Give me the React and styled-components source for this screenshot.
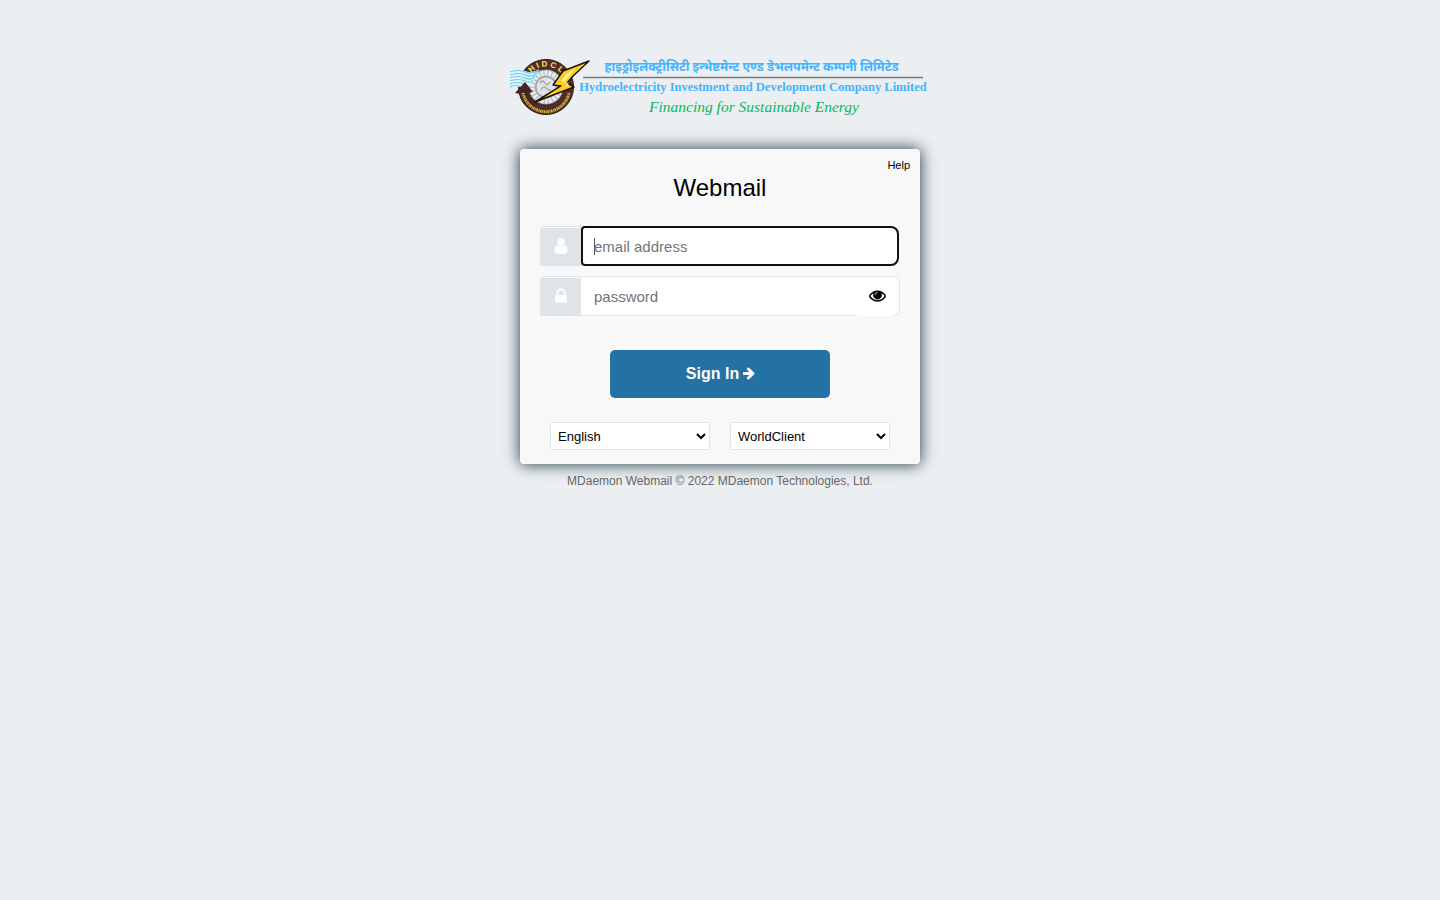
import React from "react";
import styled, { createGlobalStyle } from "styled-components";

const GlobalStyle = createGlobalStyle`
  * { box-sizing: border-box; }
  body {
    margin: 0;
    background: #ebeff2;
    color: #000;
    font-family: "Liberation Sans", Arial, sans-serif;
  }
`;

const Page = styled.main`
  display: flex;
  flex-direction: column;
  align-items: center;
  padding: 56px 10px 24px;
`;

const Logo = styled.svg`
  display: block;
  width: 100%;
  max-width: 420px;
  height: auto;
  margin-bottom: 29px;
  overflow: visible;
`;

const Card = styled.form`
  display: flex;
  flex-direction: column;
  width: 100%;
  max-width: 400px;
  padding: 10px 20px 14px;
  border-radius: 4px;
  background: #f8f8f8;
  box-shadow: 0 0 16px #1c313a;
`;

const HelpLink = styled.a`
  align-self: flex-end;
  margin-right: -10px;
  color: #000;
  font-size: 11px;
  line-height: 12px;
  text-decoration: none;
`;

const Title = styled.h1`
  margin: 2px 0 23px;
  font-size: 24px;
  font-weight: 400;
  line-height: 30px;
  text-align: center;
`;

const Field = styled.div`
  display: flex;
  height: 40px;
  margin-bottom: 10px;
`;

const Addon = styled.label`
  display: flex;
  flex: none;
  align-items: center;
  justify-content: center;
  width: 41px;
  padding: 0 0 1px 1px;
  border: 1px solid #e0e4e7;
  border-bottom: 0;
  border-radius: 5px 0 0 3px;
  background: linear-gradient(#fff 1px, #e0e4e7 1px);
  color: #fff;
`;

const InputBox = styled.div`
  display: flex;
  flex: 1;
  min-width: 0;
  border: 1px solid #e0e4e7;
  border-left: 0;
  border-radius: 0 6px 6px 0;
  background: #fff;

  &:focus-within {
    margin-right: 1px;
    border: 2px solid #101010;
    border-radius: 4px 8px 8px 4px;
  }
`;

const TextInput = styled.input`
  flex: 1;
  min-width: 0;
  padding: 1px 0 0 13px;
  border: 0;
  outline: 0;
  background: transparent;
  font-family: inherit;
  font-size: 15px;

  &::placeholder { color: #757575; }
  &:focus { padding-left: 11px; }
  &:focus:placeholder-shown {
    background: linear-gradient(#555, #555) 11px 10px / 1px 17px no-repeat;
  }
`;

const RevealButton = styled.button`
  display: flex;
  align-items: center;
  justify-content: center;
  width: 36px;
  margin: 0 6px -1px 0;
  padding: 0 0 2px 4px;
  border: 0;
  background: #fff;
  color: #000;
  cursor: pointer;

  path {
    stroke: currentColor;
    stroke-width: 40;
  }
`;

const SignInButton = styled.button`
  display: flex;
  align-items: center;
  justify-content: center;
  gap: 3px;
  align-self: center;
  width: 220px;
  height: 48px;
  margin: 24px 0;
  padding: 0 0 0 2px;
  border: 0;
  border-radius: 5px;
  background: #2471a3;
  color: #fff;
  font-family: inherit;
  font-size: 16px;
  font-weight: 700;
  cursor: pointer;

  svg { margin-bottom: 2px; }
`;

const Options = styled.div`
  display: grid;
  grid-template-columns: 1fr 1fr;
  gap: 20px;
  padding: 0 10px;
`;

const Select = styled.select`
  width: 100%;
  height: 28px;
  padding: 1px 3px 0;
  border: 1px solid #e0e4e7;
  border-radius: 3px;
  background: #fff;
  color: #000;
  font-family: inherit;
  font-size: 13px;
`;

const Footer = styled.footer`
  margin-top: 10px;
  color: #666;
  font-size: 12px;
  line-height: 14px;
`;

const paths = {
  user: "M1536 1399q0 109-62.5 187t-150.5 78h-854q-88 0-150.5-78t-62.5-187q0-85 8.5-160.5t31.5-152 58.5-131 94-89 134.5-34.5q131 128 313 128t313-128q76 0 134.5 34.5t94 89 58.5 131 31.5 152 8.5 160.5zm-256-887q0 159-112.5 271.5t-271.5 112.5-271.5-112.5-112.5-271.5 112.5-271.5 271.5-112.5 271.5 112.5 112.5 271.5z",
  lock: "M640 768h512v-192q0-106-75-181t-181-75-181 75-75 181v192zm832 96v576q0 40-28 68t-68 28h-960q-40 0-68-28t-28-68v-576q0-40 28-68t68-28h32v-192q0-184 132-316t316-132 316 132 132 316v192h32q40 0 68 28t28 68z",
  eye: "M1664 960q-152-236-381-353 61 104 61 225 0 185-131.5 316.5t-316.5 131.5-316.5-131.5-131.5-316.5q0-121 61-225-229 117-381 353 133 205 333.5 326.5t434.5 121.5 434.5-121.5 333.5-326.5zm-720-384q0-20-14-34t-34-14q-125 0-214.5 89.5t-89.5 214.5q0 20 14 34t34 14 34-14 14-34q0-86 61-147t147-61q20 0 34-14t14-34zm848 384q0 34-20 69-140 230-376.5 368.5t-499.5 138.5-499.5-139-376.5-368q-20-35-20-69t20-69q140-229 376.5-368t499.5-139 499.5 139 376.5 368q20 35 20 69z",
  arrow: "M1600 960q0 54-37 91l-651 651q-39 37-91 37-51 0-90-37l-75-75q-38-38-38-91t38-91l293-293h-704q-52 0-84.5-37.5t-32.5-90.5v-128q0-53 32.5-90.5t84.5-37.5h704l-293-294q-38-36-38-90t38-90l75-75q38-38 90-38 53 0 91 38l651 651q37 35 37 90z",
};

function Icon({ name, size }) {
  return (
    <svg width={size} height={size} viewBox="0 0 1792 1792" fill="currentColor" aria-hidden="true">
      <path d={paths[name]} />
    </svg>
  );
}

function CompanyLogo() {
  return (
    <Logo viewBox="0 0 840 128" role="img" aria-label="HIDCL">
      <defs>
        <path id="ringTop" d="M15.5 31a20.500 20.500 0 0 1 41 0" />
      </defs>
      <g transform="scale(2)">
        <circle cx="36" cy="31" r="27.500" fill="#56292a" stroke="#2a1515" />
        <circle cx="36" cy="31" r="18" fill="#a9b3b7" stroke="#2e2424" />
        <circle cx="36" cy="31" r="14" fill="none" stroke="#e9eeee" strokeWidth="5" strokeDasharray="3 1" />
        <circle cx="36" cy="31" r="10" fill="#dfe5e6" stroke="#8f9a9e" strokeWidth=".8" />
        <path d="M30 27q3-4 5 0t5-1M31 34q2-5 5-2t5 2" fill="none" stroke="#9aa4a8" strokeWidth="1.300" />
        <path d="M0 15q8-3 15 0t14-2l-8 16q-4 3-8 2t-13 1z" fill="#dff3fa" />
        <g fill="none" stroke="#69c9ef" strokeWidth="1.200">
          <path d="M0 16q8-3 15 0t14-2" />
          <path d="M0 19q8-3 15 0t12-2" />
          <path d="M0 22q8-3 15 0t10-2" />
          <path d="M0 25q8-3 15 0t8-1" />
          <path d="M0 28q8-3 14 0" />
          <path d="M0 31q6-3 11 0" />
        </g>
        <path d="M5 37L15 26l8 10-5 1q2 7 9 11l-5 6Q10 48 10 38z" fill="#4a2322" />
        <text fill="#f5ec45" fontFamily="Liberation Sans, sans-serif" fontSize="8" fontWeight="700">
          <textPath href="#ringTop" startOffset="50%" textAnchor="middle">H I D C L</textPath>
        </text>
        <path d="M13 37a23.500 23.500 0 0 0 46 0" fill="none" stroke="#cdbd3b" strokeWidth="3" strokeDasharray="1.500 .7 1 .5" />
        <path d="M79 5L53 15 43 29l8 1-26 16 39-15-7-4 6-7z" fill="#ffd42a" stroke="#1d120b" strokeWidth="1.500" strokeLinejoin="round" />
        <path d="M72 9L55 17l-8 10 8 1-17 11 21-8-6-4 7-8z" fill="#ffc21f" />
        <path d="M66 12L56 18l-5 7 8 2-8 6 8-4-5-3 5-6z" fill="#fff38a" />
        <path d="M73 21.500h340" stroke="#747b80" strokeWidth="1.500" />
      </g>
      <g textAnchor="middle">
        <text x="483" y="30" fill="#42b4ff" fontFamily="Noto Sans Devanagari, Noto Sans, sans-serif" fontSize="25" fontWeight="700">हाइड्रोइलेक्ट्रीसिटी इन्भेष्टमेन्ट एण्ड डेभलपमेन्ट कम्पनी लिमिटेड</text>
        <text x="486" y="70" fill="#42b4ff" fontFamily="Liberation Serif, serif" fontSize="25" fontWeight="700">Hydroelectricity Investment and Development Company Limited</text>
        <text x="488" y="111" fill="#08b85c" fontFamily="Liberation Serif, serif" fontSize="31" fontStyle="italic">Financing for Sustainable Energy</text>
      </g>
    </Logo>
  );
}

export default function App() {
  const [revealed, setRevealed] = React.useState(false);
  return (
    <>
      <GlobalStyle />
      <Page>
        <CompanyLogo />
        <Card onSubmit={(e) => e.preventDefault()}>
          <HelpLink href="#help">Help</HelpLink>
          <Title>Webmail</Title>
          <Field>
            <Addon htmlFor="email" aria-label="email address"><Icon name="user" size={18} /></Addon>
            <InputBox>
              <TextInput id="email" type="text" placeholder="email address" autoFocus />
            </InputBox>
          </Field>
          <Field>
            <Addon htmlFor="password" aria-label="password"><Icon name="lock" size={18} /></Addon>
            <InputBox>
              <TextInput id="password" type={revealed ? "text" : "password"} placeholder="password" />
              <RevealButton type="button" aria-label="Show password" onClick={() => setRevealed(!revealed)}>
                <Icon name="eye" size={17} />
              </RevealButton>
            </InputBox>
          </Field>
          <SignInButton type="submit">Sign In<Icon name="arrow" size={14} /></SignInButton>
          <Options>
            <Select aria-label="Language" defaultValue="English"><option>English</option></Select>
            <Select aria-label="Theme" defaultValue="WorldClient"><option>WorldClient</option></Select>
          </Options>
        </Card>
        <Footer>MDaemon Webmail © 2022 MDaemon Technologies, Ltd.</Footer>
      </Page>
    </>
  );
}
